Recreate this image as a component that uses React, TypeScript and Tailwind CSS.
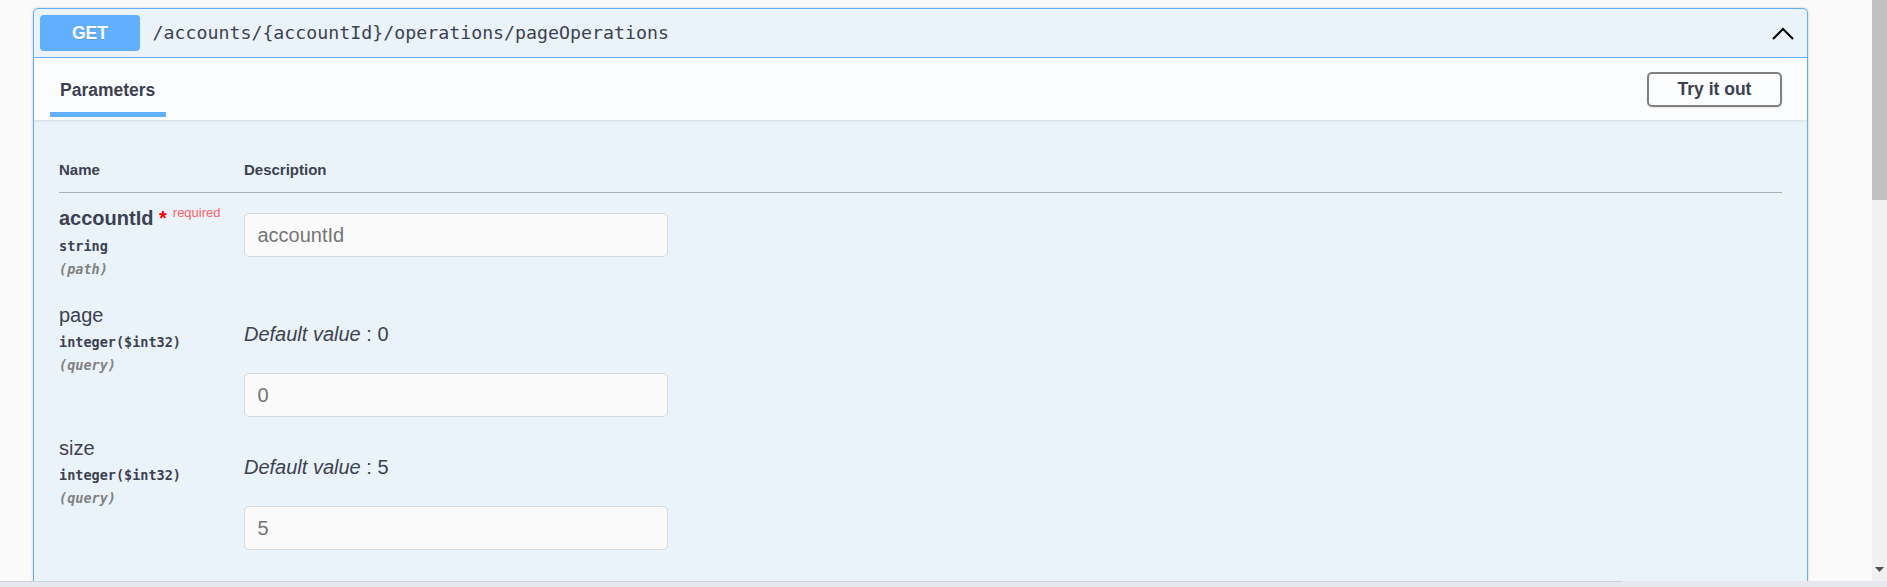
import React from 'react';

const params = [
  { name: 'page', type: 'integer($int32)', where: '(query)', def: '0' },
  { name: 'size', type: 'integer($int32)', where: '(query)', def: '5' },
];

const ChevronUp = () => (
  <svg width="22" height="13" viewBox="0 0 22 13" fill="none">
    <polyline points="1,12 11,2 21,12" stroke="#000" strokeWidth="2" />
  </svg>
);

const App = () => {
  return (
    <div className="h-[587px] w-[1887px] overflow-hidden flex flex-col bg-[#fafafa] font-['Liberation_Sans',Arial,sans-serif]">
      <div className="flex flex-1 min-h-0">
        <div className="flex-1 overflow-hidden pt-[8px] pl-[33px]">
          <div className="w-[1775px] rounded-[5px] border border-[#61affe] bg-[#ebf3fa] shadow-[0_0_3px_rgba(0,0,0,0.19)]">
            {/* summary */}
            <div className="flex items-center h-[49px] px-[6px] border-b border-[#61affe]">
              <div className="w-[100px] h-[36px] rounded-[4px] bg-[#61affe] text-white font-bold text-[17.5px] flex items-center justify-center [text-shadow:0_1px_0_rgba(0,0,0,0.1)]">
                GET
              </div>
              <div className="ml-[12.5px] flex-1 font-['DejaVu_Sans_Mono',monospace] text-[18.25px] text-[#3b4151]">
                /accounts/{'{accountId}'}/operations/pageOperations
              </div>
              <div className="mr-[7px] flex">
                <ChevronUp />
              </div>
            </div>

            {/* section header */}
            <div className="relative z-10 h-[62px] flex items-center justify-between pl-[15.5px] pr-[25px] bg-[#fbfcfe] shadow-[0_1px_2px_rgba(0,0,0,0.1)]">
              <div className="self-stretch flex flex-col pt-[21.5px]">
                <div className="px-[10.5px] text-[17.5px] leading-[20px] font-bold text-[#3b4151]">Parameters</div>
                <div className="mt-[12.5px] h-[4.5px] bg-[#61affe]" />
              </div>
              <button className="w-[135px] h-[35px] rounded-[5px] border-2 border-[#808080] text-[17.5px] font-bold text-[#3b4151] shadow-[0_1px_2px_rgba(0,0,0,0.1)]">
                Try it out
              </button>
            </div>

            {/* parameters table */}
            <div className="px-[25px] pt-[40.5px] pb-[40px]">
              <div className="flex pb-[13.5px] border-b border-[#a9afba] text-[15px] leading-[18px] font-bold text-[#3b4151]">
                <div className="w-[185px]">Name</div>
                <div>Description</div>
              </div>

              <div className="flex items-start h-[96px]">
                <div className="w-[185px] pt-[12.5px] flex flex-col">
                  <div className="text-[20px] leading-[24px] font-bold text-[#3b4151] whitespace-nowrap">
                    accountId<span className="text-[#ff0000]">&nbsp;*</span>
                    <span className="relative top-[-8px] pl-[6px] text-[13px] font-normal text-[#fc6166]">required</span>
                  </div>
                  <div className="mt-[5.5px] font-['DejaVu_Sans_Mono',monospace] font-bold text-[13.5px] leading-[16px] text-[#3b4151]">
                    string
                  </div>
                  <div className="mt-[7px] font-['DejaVu_Sans_Mono',monospace] font-semibold italic text-[13.5px] leading-[16px] text-[#808080]">
                    (path)
                  </div>
                </div>
                <div className="pt-[20px]">
                  <input
                    type="text"
                    placeholder="accountId"
                    className="w-[424px] h-[44px] rounded-[5px] border border-[#d9d9d9] bg-[#fafafa] pl-[12.5px] text-[20px] outline-none placeholder:text-[#757575]"
                  />
                </div>
              </div>

              {params.map((p) => (
                <div key={p.name} className="flex items-start h-[133px]">
                  <div className="w-[185px] pt-[14px] flex flex-col">
                    <div className="text-[20px] leading-[24px] text-[#3b4151]">{p.name}</div>
                    <div className="mt-[7px] font-['DejaVu_Sans_Mono',monospace] font-bold text-[13.5px] leading-[16px] text-[#3b4151]">
                      {p.type}
                    </div>
                    <div className="mt-[7px] font-['DejaVu_Sans_Mono',monospace] font-semibold italic text-[13.5px] leading-[16px] text-[#808080]">
                      {p.where}
                    </div>
                  </div>
                  <div className="pt-[33px] flex flex-col">
                    <div className="text-[20px] leading-[24px] text-[#3b4151]">
                      <i>Default value</i> : {p.def}
                    </div>
                    <input
                      type="text"
                      placeholder={p.def}
                      className="mt-[27px] w-[424px] h-[44px] rounded-[5px] border border-[#d9d9d9] bg-[#fafafa] pl-[12.5px] text-[20px] outline-none placeholder:text-[#757575]"
                    />
                  </div>
                </div>
              ))}
            </div>
          </div>
        </div>

        {/* vertical scrollbar */}
        <div className="w-[15px] bg-[#f1f1f1] flex flex-col justify-between">
          <div className="h-[200px] bg-[#c1c1c1]" />
          <svg width="9" height="5" viewBox="0 0 9 5" className="mx-auto mb-[9px]">
            <polygon points="0,0 9,0 4.5,5" fill="#505050" />
          </svg>
        </div>
      </div>

      {/* bottom strip */}
      <div className="h-[6px] bg-[#e6e8ee]">
        <div className="w-[1622px] h-[1px] bg-[#cdd1d8]" />
      </div>
    </div>
  );
};

export default App;
